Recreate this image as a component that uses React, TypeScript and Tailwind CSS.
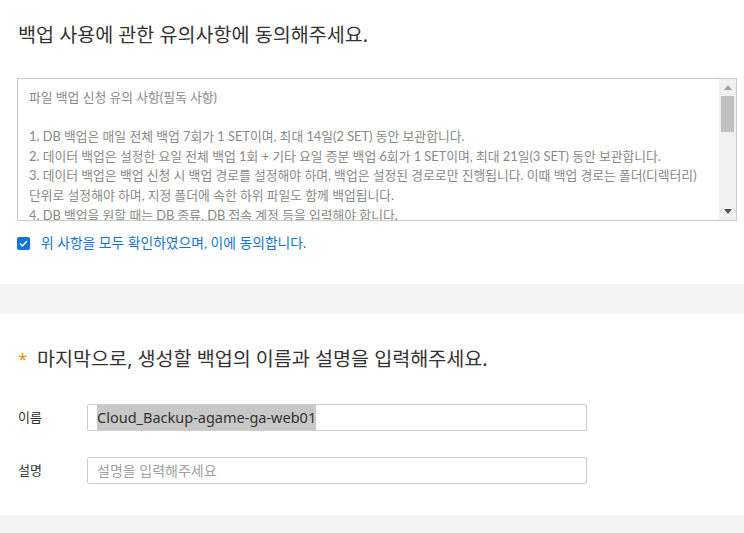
import React from 'react';

const notes = [
  '파일 백업 신청 유의 사항(필독 사항)',
  '',
  '1. DB 백업은 매일 전체 백업 7회가 1 SET이며, 최대 14일(2 SET) 동안 보관합니다.',
  '2. 데이터 백업은 설정한 요일 전체 백업 1회 + 기타 요일 증분 백업 6회가 1 SET이며, 최대 21일(3 SET) 동안 보관합니다.',
  '3. 데이터 백업은 백업 신청 시 백업 경로를 설정해야 하며, 백업은 설정된 경로로만 진행됩니다. 이때 백업 경로는 폴더(디렉터리)',
  '단위로 설정해야 하며, 지정 폴더에 속한 하위 파일도 함께 백업됩니다.',
  '4. DB 백업을 원할 때는 DB 종류, DB 접속 계정 등을 입력해야 합니다.',
];

function FakeScrollbar() {
  return (
    <div className="w-[17px] bg-[#f0f0f0] flex flex-col items-center">
      <div className="h-[17px] flex items-center justify-center">
        <svg width="8" height="5" viewBox="0 0 8 5">
          <path d="M4 0 L8 5 L0 5 Z" fill="#a3a3a3" />
        </svg>
      </div>
      <div className="w-[13px] h-[36px] bg-[#c1c1c1]" />
      <div className="flex-1" />
      <div className="h-[17px] flex items-center justify-center">
        <svg width="8" height="5" viewBox="0 0 8 5">
          <path d="M0 0 L8 0 L4 5 Z" fill="#505050" />
        </svg>
      </div>
    </div>
  );
}

export default function App() {
  return (
    <div
      className="w-[744px] h-[533px] bg-white overflow-hidden flex flex-col"
      style={{ fontFamily: "'Noto Sans', 'Noto Sans CJK KR', sans-serif" }}
    >
      {/* 유의사항 동의 */}
      <div className="pl-[17px] pr-[7px] pt-[22px]">
        <h2 className="text-[19.6px] leading-[26px] text-[#333] pl-px">
          백업 사용에 관한 유의사항에 동의해주세요.
        </h2>

        <div className="mt-[30px] h-[143px] border border-[#cbcbcb] flex">
          <div
            className="flex-1 overflow-hidden pl-[11px] pt-[9px] text-[12.8px] leading-[19.6px] text-[#888]"
            style={{ fontFamily: "Lato, 'Noto Sans CJK KR', sans-serif" }}
          >
            {notes.map((line, i) => (
              <div key={i} className="whitespace-nowrap h-[19.6px]">
                {line}
              </div>
            ))}
          </div>
          <FakeScrollbar />
        </div>

        <label
          className="mt-[14px] flex items-center gap-[11px] text-[13.8px] leading-[16px] text-[#1174d6]"
          style={{ fontFamily: "Lato, 'Noto Sans CJK KR', sans-serif" }}
        >
          <span className="w-[13px] h-[13px] rounded-[2px] bg-[#1174d6] flex items-center justify-center">
            <svg width="9" height="7" viewBox="0 0 9 7">
              <path d="M1 3.6 L3.4 6 L8 1" stroke="white" strokeWidth="1.4" fill="none" />
            </svg>
          </span>
          <span>위 사항을 모두 확인하였으며, 이에 동의합니다.</span>
        </label>
      </div>

      <div className="mt-[33px] h-[30px] bg-[#f4f4f4]" />

      {/* 이름/설명 입력 */}
      <div className="pl-[18px] pt-[32px]">
        <h2 className="text-[19.6px] leading-[26px] text-[#333] flex">
          <span className="text-[#f08c00] w-[19px] text-[17px]">*</span>
          <span>마지막으로, 생성할 백업의 이름과 설명을 입력해주세요.</span>
        </h2>

        <div className="mt-[32px] flex items-center">
          <span className="w-[69px] text-[13px] text-[#333]">이름</span>
          <div className="w-[500px] h-[27px] border border-[#cccccc] rounded-[2px] pl-[9px] flex items-stretch">
            <span className="bg-[#c8c8c8] text-[14.5px] text-[#333] flex items-center leading-none">
              Cloud_Backup-agame-ga-web01
            </span>
          </div>
        </div>

        <div className="mt-[26px] flex items-center">
          <span className="w-[69px] text-[13px] text-[#333]">설명</span>
          <input
            className="w-[500px] h-[27px] border border-[#cccccc] rounded-[2px] pl-[9px] text-[14px] text-[#333] placeholder:text-[#a0a0a0] outline-none"
            placeholder="설명을 입력해주세요"
          />
        </div>
      </div>

      <div className="mt-[31px] flex-1 bg-[#f4f4f4]" />
    </div>
  );
}
